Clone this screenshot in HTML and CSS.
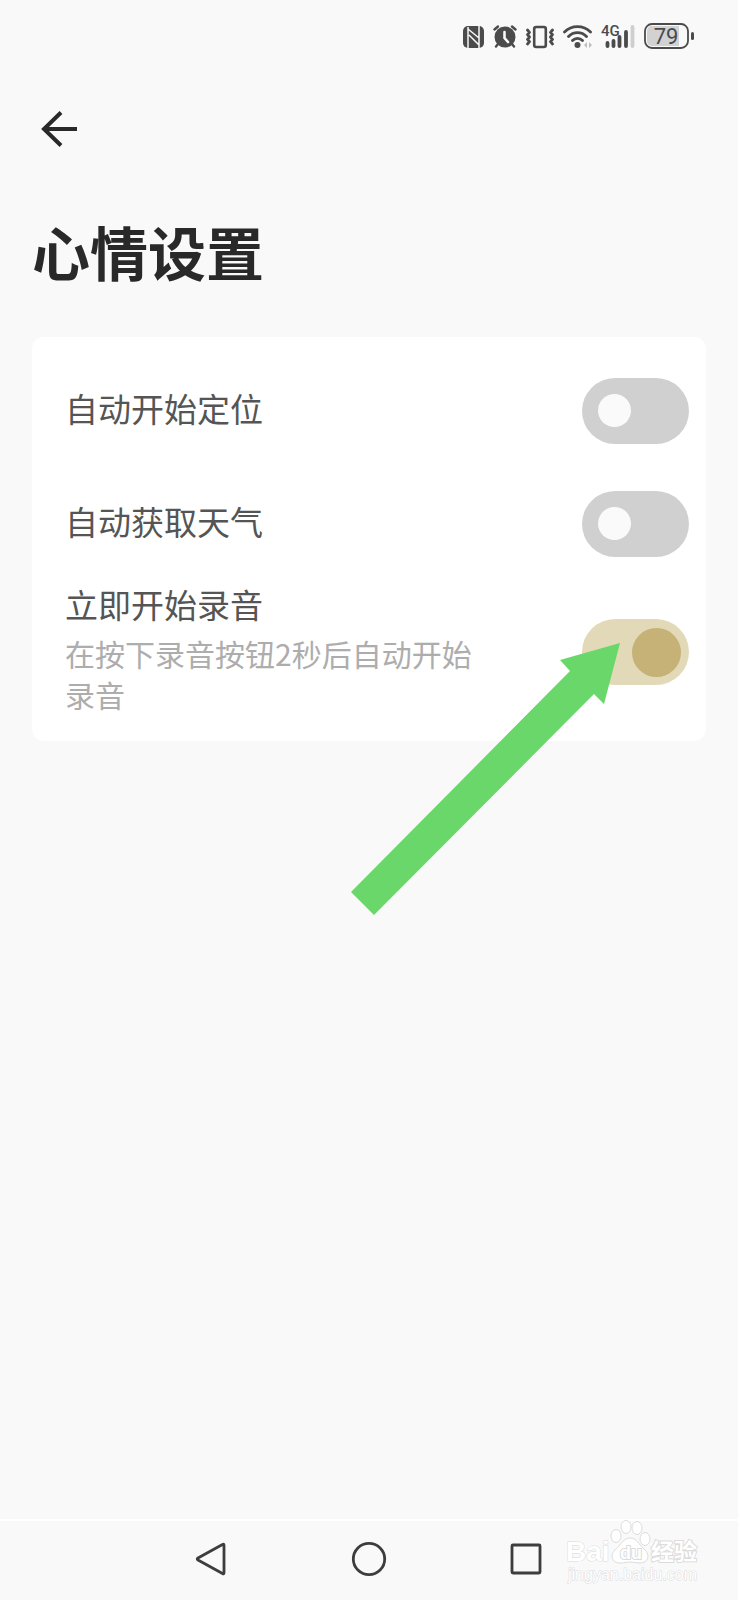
FILE: index.html
```html
<!DOCTYPE html>
<html lang="zh-CN">
<head>
<meta charset="utf-8">
<meta name="viewport" content="width=device-width, initial-scale=1">
<title>心情设置</title>
<link rel="stylesheet" href="styles.css">
</head>
<body>
<div class="screen">
  <div class="status-bar">
    <svg class="status-icon" width="21" height="26" viewBox="0 0 21 26" aria-label="NFC">
      <rect x="0" y="3" width="21" height="22" rx="5" fill="#4b4b4b"/>
      <path d="M5 25V4M16 3v22M5 6l11 9M6 12l10 10" fill="none" stroke="#f9f9f9" stroke-width="1.500"/>
    </svg>
    <svg class="status-icon" width="24" height="26" viewBox="0 0 24 26" aria-label="闹钟">
      <circle cx="12" cy="14" r="10.500" fill="#4b4b4b"/>
      <path d="M1.500 6.500l3.500-3M22.500 6.500l-3.500-3M5 21l-2 2.500M19 21l2 2.500" stroke="#4b4b4b" stroke-width="2.400" stroke-linecap="round"/>
      <path d="M11.500 9v6l3.500 4" fill="none" stroke="#f9f9f9" stroke-width="2.600" stroke-linecap="round"/>
    </svg>
    <svg class="status-icon" width="28" height="26" viewBox="0 0 28 26" aria-label="振动">
      <rect x="8.200" y="4" width="11.600" height="20" rx="2" fill="none" stroke="#4b4b4b" stroke-width="2.600"/>
      <path d="M1.500 7l2 2.300-2 2.300 2 2.400-2 2.400 2 2.300-2 2.300M26.500 7l-2 2.300 2 2.300-2 2.400 2 2.400-2 2.300 2 2.300" fill="none" stroke="#4b4b4b" stroke-width="2.800" stroke-linejoin="round" stroke-linecap="round"/>
    </svg>
    <svg class="status-icon" width="29" height="26" viewBox="0 0 29 26" aria-label="无线网络">
      <path d="M1.500 9a18.500 18.500 0 0 1 26 0M5.500 13.500a12.500 12.500 0 0 1 18 0M9.500 17.500a7 7 0 0 1 10 0" fill="none" stroke="#4b4b4b" stroke-width="2.800" stroke-linecap="round"/>
      <circle cx="14.500" cy="22" r="3" fill="#4b4b4b"/>
      <path d="M24 19v6l-3-3zM26 19v6l3-3z" fill="#bdbdbd"/>
    </svg>
    <svg class="status-icon" width="34" height="26" viewBox="0 0 34 26" aria-label="移动信号">
      <text class="net-text" x="0" y="13">4G</text>
      <path d="M6.500 20v3M12.500 18v5M18.500 14v9M25 9v14" stroke="#4b4b4b" stroke-width="3.800" stroke-linecap="round"/>
      <path d="M31.500 4v19" stroke="#cfcfcf" stroke-width="3.800" stroke-linecap="round"/>
    </svg>
    <svg class="status-icon" width="50" height="26" viewBox="0 0 50 26" aria-label="电量">
      <path d="M8 3h27v20H8a5 5 0 0 1-5-5V8a5 5 0 0 1 5-5z" fill="#d2d2d2"/>
      <rect x="1" y="1" width="43" height="24" rx="7" fill="none" stroke="#4b4b4b" stroke-width="1.800"/>
      <path d="M48.500 10.500v5" stroke="#4b4b4b" stroke-width="3" stroke-linecap="round"/>
      <text class="battery-text" x="22" y="21" text-anchor="middle">79</text>
    </svg>
  </div>

  <header class="header">
    <button class="back" type="button" aria-label="返回">
      <svg width="36" height="36" viewBox="0 0 36 36"><path d="M20 1.500L3 18l17 16.500M3 18h33" fill="none" stroke="#292929" stroke-width="4"/></svg>
    </button>
    <h1 class="title">心情设置</h1>
  </header>

  <main class="card">
    <div class="row">
      <label class="label" for="locate">自动开始定位</label>
      <div class="control"><input class="switch" type="checkbox" role="switch" id="locate"></div>
    </div>
    <div class="row">
      <label class="label" for="weather">自动获取天气</label>
      <div class="control"><input class="switch" type="checkbox" role="switch" id="weather"></div>
    </div>
    <div class="row row-detail">
      <div class="texts">
        <label class="label" for="record">立即开始录音</label>
        <p class="desc" id="record-desc">在按下录音按钮2秒后自动开始录音</p>
      </div>
      <div class="control">
        <input class="switch" type="checkbox" role="switch" id="record" aria-describedby="record-desc" checked>
        <svg class="pointer" width="269" height="272" viewBox="0 0 269 272" aria-hidden="true"><path d="M269 0L253 61 243 51 23 272 0 249 219 28 209 17z" fill="#69d76a"/></svg>
      </div>
    </div>
  </main>

  <nav class="nav">
    <button class="nav-button" type="button" aria-label="返回"><svg width="36" height="36" viewBox="0 0 36 36"><path d="M28.500 3.500q1.500-1 1.500 1v27q0 2-1.500 1L4 19q-1.500-1 0-2z" fill="none" stroke="#3d3d3d" stroke-width="2.800" stroke-linejoin="round"/></svg></button>
    <button class="nav-button" type="button" aria-label="主屏幕"><svg width="36" height="36" viewBox="0 0 36 36"><circle cx="18" cy="18" r="15.700" fill="none" stroke="#3d3d3d" stroke-width="2.800"/></svg></button>
    <button class="nav-button" type="button" aria-label="最近任务"><svg width="36" height="36" viewBox="0 0 36 36"><rect x="4" y="4" width="28" height="28" rx="1" fill="none" stroke="#3d3d3d" stroke-width="2.800"/></svg></button>
    <svg class="watermark" width="136" height="66" viewBox="0 0 136 66" aria-label="Baidu 经验">
      <g class="paw">
        <ellipse cx="52" cy="16" rx="5" ry="6.500"/>
        <ellipse cx="62" cy="7" rx="5" ry="6.500"/>
        <ellipse cx="73" cy="8" rx="5" ry="6.500"/>
        <ellipse cx="81" cy="19" rx="5" ry="6.500"/>
        <path d="M66 18c7 0 9 7 14 11 7 6 4 14-4 14-4 0-6-1-10-1s-6 1-10 1c-8 0-11-8-4-14 5-4 7-11 14-11z"/>
      </g>
      <text class="mark" x="2" y="41">Bai</text>
      <text class="mark mark-du" x="56" y="39">du</text>
      <text class="mark mark-cjk" x="87" y="40">经验</text>
      <text class="mark mark-url" x="4" y="60">jingyan.baidu.com</text>
    </svg>
  </nav>
</div>
</body>
</html>
```

FILE: styles.css
```css
* {
  box-sizing: border-box;
}

body {
  margin: 0;
  background: #f9f9f9;
  color: #292929;
  font-family: "Noto Sans CJK SC", sans-serif;
}

button {
  padding: 0;
  border: 0;
  background: none;
}

svg {
  display: block;
}

.screen {
  display: flex;
  flex-direction: column;
  min-height: 100vh;
}

.status-bar {
  display: flex;
  justify-content: flex-end;
  align-items: center;
  gap: 9px;
  height: 71px;
  padding: 0 44px;
}

.net-text {
  font: 500 15px Roboto, sans-serif;
  fill: #4b4b4b;
}

.battery-text {
  font: 400 22px Roboto, sans-serif;
  fill: #4b4b4b;
}

.header {
  padding: 40px 32px 46px;
}

.back {
  display: block;
  margin-left: 9px;
}

.title {
  margin: 64px 0 0;
  font-size: 58px;
  font-weight: 700;
  line-height: 80px;
}

.card {
  margin: 0 32px;
  padding: 17px;
  border-radius: 12px;
  background: #fff;
}

.row {
  display: flex;
  justify-content: space-between;
  align-items: center;
  gap: 84px;
  min-height: 113px;
  padding-left: 16px;
}

.row-detail {
  min-height: 144px;
}

.texts {
  flex: 1;
}

.label {
  display: block;
  padding-bottom: 6px;
  color: #555;
  font-size: 33px;
  line-height: 38px;
}

.desc {
  margin: 0;
  padding: 4px 0;
  color: #adadad;
  font-size: 30px;
  line-height: 41px;
}

.control {
  position: relative;
  flex: none;
}

.switch {
  appearance: none;
  display: flex;
  align-items: center;
  width: 107px;
  height: 66px;
  margin: 0;
  padding: 0 16px;
  border-radius: 33px;
  background: #d0d0d0;
}

.switch::before {
  content: "";
  width: 33px;
  height: 33px;
  border-radius: 50%;
  background: #fafafa;
}

.switch:checked {
  justify-content: flex-end;
  padding: 0 8px;
  background: #e2d9b9;
}

.switch:checked::before {
  width: 49px;
  height: 49px;
  background: #c6b277;
}

.pointer {
  position: absolute;
  top: 24px;
  right: 69px;
}

.nav {
  position: relative;
  display: flex;
  justify-content: center;
  margin-top: auto;
  padding-bottom: 3px;
  border-top: 2px solid #fff;
}

.nav-button {
  display: flex;
  justify-content: center;
  align-items: center;
  width: 157px;
  height: 76px;
}

.watermark {
  position: absolute;
  right: 38px;
  bottom: 14px;
  overflow: visible;
}

.paw,
.mark {
  fill: #fff;
  stroke: #dcdcdc;
  stroke-width: 1px;
}

.mark {
  font: 700 28px "Liberation Sans", sans-serif;
  paint-order: stroke;
}

.mark-du {
  font-size: 18px;
  stroke-width: 2px;
}

.mark-cjk {
  font: 700 23px "Noto Sans CJK SC", sans-serif;
  stroke-width: 2px;
}

.mark-url {
  font-weight: 400;
  font-size: 16px;
}
```
